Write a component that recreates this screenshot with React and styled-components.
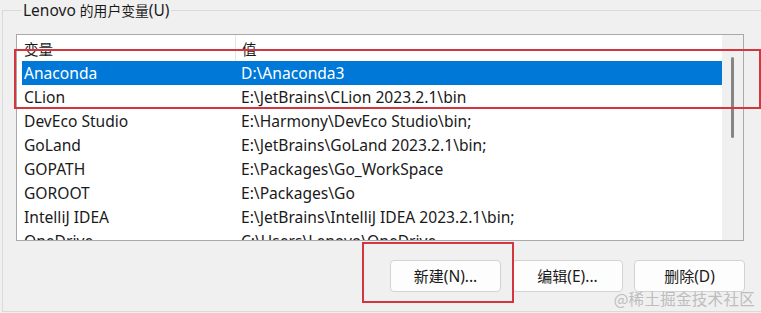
import React from "react";
import styled, { createGlobalStyle } from "styled-components";

const Global = createGlobalStyle`
  html, body {
    margin: 0;
    padding: 0;
    background: #f0f0f0;
    overflow: hidden;
  }
  body {
    font-family: "Noto Sans", "Noto Sans CJK SC", sans-serif;
    font-size: 15px;
    color: #1a1a1a;
  }
`;

const Page = styled.div`
  position: relative;
  width: 761px;
  height: 313px;
  overflow: hidden;
  background: #f0f0f0;
`;

const Group = styled.fieldset`
  margin: 0 0 0 2px;
  padding: 13px 0 0 13px;
  width: 800px;
  height: 312px;
  box-sizing: border-box;
  border: 1px solid #dadada;
  min-width: 0;
`;

const Legend = styled.legend`
  margin-left: 5px;
  padding: 0 2px;
  line-height: 20px;
  font-size: 15.5px;
  color: #1a1a1a;
`;

const Cjk = styled.span`
  font-size: ${(p) => p.$size || "13.8px"};
`;

const ListBox = styled.div`
  width: 728px;
  height: 207px;
  box-sizing: border-box;
  border: 1px solid #a9a9a9;
  background: #fff;
  display: flex;
  overflow: hidden;
`;

const Content = styled.div`
  flex: 1;
  padding-left: 5px;
  overflow: hidden;
  font-size: 15.6px;
`;

const Row = styled.div`
  display: grid;
  grid-template-columns: 213px 1fr;
  height: ${(p) => (p.$header ? "26px" : "24px")};
  line-height: ${(p) => (p.$header ? "29px" : "24px")};
  background: ${(p) => (p.$selected ? "#0078d7" : "transparent")};
  color: ${(p) => (p.$selected ? "#fff" : "#1a1a1a")};
  white-space: nowrap;
`;

const Cell = styled.div`
  padding-left: ${(p) => (p.$second ? "6px" : "2px")};
  border-left: ${(p) => (p.$divider ? "1px solid #e5e5e5" : "none")};
  overflow: hidden;
`;

const ScrollTrack = styled.div`
  width: 21px;
  background: #f0f0f0;
  display: flex;
  justify-content: center;
  padding-top: 22px;
  box-sizing: border-box;
`;

const Thumb = styled.div`
  width: 3px;
  height: 81px;
  border-radius: 2px;
  background: #868686;
`;

const Buttons = styled.div`
  display: flex;
  justify-content: flex-end;
  gap: 11px;
  width: 729px;
  margin-top: 19px;
`;

const Button = styled.button`
  width: 111px;
  height: 32px;
  box-sizing: border-box;
  background: #fdfdfd;
  border: 1px solid #d3d3d3;
  border-radius: 4px;
  font-family: "Noto Sans", "Noto Sans CJK SC", sans-serif;
  font-size: 15.5px;
  color: #1a1a1a;
  padding: 0;
`;

const Highlight = styled.div`
  position: absolute;
  box-sizing: border-box;
  border: 2px solid #d3363f;
  pointer-events: none;
`;

const Watermark = styled.div`
  position: absolute;
  right: 6px;
  bottom: 4px;
  font-family: "Noto Sans CJK SC", sans-serif;
  font-size: 15.5px;
  color: #bdbdbd;
  letter-spacing: 0.3px;
`;

const rows = [
  ["Anaconda", "D:\\Anaconda3"],
  ["CLion", "E:\\JetBrains\\CLion 2023.2.1\\bin"],
  ["DevEco Studio", "E:\\Harmony\\DevEco Studio\\bin;"],
  ["GoLand", "E:\\JetBrains\\GoLand 2023.2.1\\bin;"],
  ["GOPATH", "E:\\Packages\\Go_WorkSpace"],
  ["GOROOT", "E:\\Packages\\Go"],
  ["IntelliJ IDEA", "E:\\JetBrains\\IntelliJ IDEA 2023.2.1\\bin;"],
  ["OneDrive", "C:\\Users\\Lenovo\\OneDrive"],
];

export default function App() {
  return (
    <Page>
      <Global />
      <Group>
        <Legend>
          Lenovo <Cjk>的用户变量</Cjk>(U)
        </Legend>
        <ListBox>
          <Content>
            <Row $header>
              <Cell>
                <Cjk $size="14.5px">变量</Cjk>
              </Cell>
              <Cell $second $divider>
                <Cjk $size="14.5px">值</Cjk>
              </Cell>
            </Row>
            {rows.map(([k, v], i) => (
              <Row key={k} $selected={i === 0}>
                <Cell>{k}</Cell>
                <Cell $second>{v}</Cell>
              </Row>
            ))}
          </Content>
          <ScrollTrack>
            <Thumb />
          </ScrollTrack>
        </ListBox>
        <Buttons>
          <Button>
            <Cjk $size="15px">新建</Cjk>(N)...
          </Button>
          <Button>
            <Cjk $size="15px">编辑</Cjk>(E)...
          </Button>
          <Button>
            <Cjk $size="15px">删除</Cjk>(D)
          </Button>
        </Buttons>
      </Group>
      <Highlight style={{ left: 14, top: 49, width: 747, height: 60 }} />
      <Highlight style={{ left: 362, top: 242, width: 152, height: 61 }} />
      <Watermark>@稀土掘金技术社区</Watermark>
    </Page>
  );
}
